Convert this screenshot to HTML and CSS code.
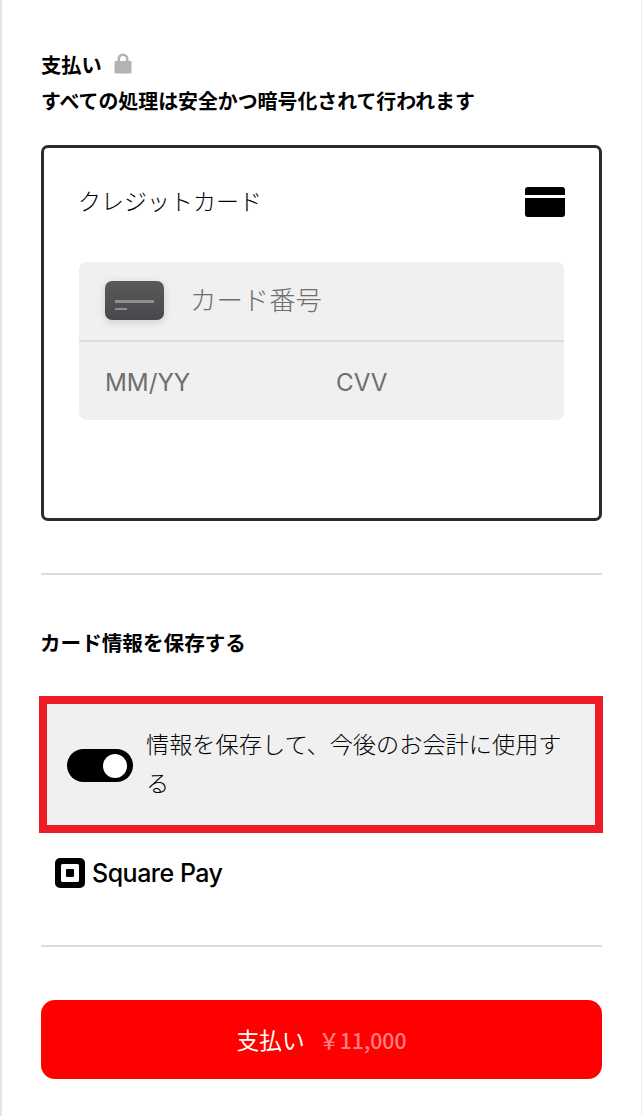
FILE: index.html
```html
<!DOCTYPE html>
<html lang="ja">
<head>
  <meta charset="UTF-8">
  <title>支払い</title>
  <link rel="stylesheet" href="styles.css">
</head>
<body>
  <div class="page">
    <div class="pay-head">
      <div class="pay-title">
        <span>支払い</span>
        <svg class="lock" width="18" height="21" viewBox="0 0 18 21">
          <path d="M3.500 9V6a5.500 5.500 0 0 1 11 0v3h-2.600V6a2.900 2.900 0 0 0-5.800 0v3z" fill="#b3b3b3"/>
          <rect x="0.500" y="8" width="17" height="12.500" rx="1" fill="#b3b3b3"/>
        </svg>
      </div>
      <div class="pay-note">すべての処理は安全かつ暗号化されて行われます</div>
    </div>

    <div class="card-box">
      <div class="card-head">
        <span class="card-name">クレジットカード</span>
        <svg class="card-icon" width="40" height="30" viewBox="0 0 40 30">
          <path d="M0 8V3a3 3 0 0 1 3-3h34a3 3 0 0 1 3 3v5z" fill="#000"/>
          <path d="M0 11h40v16a3 3 0 0 1-3 3H3a3 3 0 0 1-3-3z" fill="#000"/>
        </svg>
      </div>
      <div class="card-form">
        <div class="card-row">
          <div class="card-chip"><i class="chip-long"></i><i class="chip-short"></i></div>
          <span class="card-number">カード番号</span>
        </div>
        <div class="card-row2">
          <span class="expiry">MM/YY</span>
          <span>CVV</span>
        </div>
      </div>
    </div>

    <hr class="rule rule-a">

    <div class="save-title">カード情報を保存する</div>

    <div class="save-box">
      <div class="toggle"><span class="knob"></span></div>
      <div class="save-text">情報を保存して、今後のお会計に使用する</div>
    </div>

    <div class="square">
      <svg width="30" height="30" viewBox="0 0 30 30">
        <path fill-rule="evenodd" d="M5 0h20a5 5 0 0 1 5 5v20a5 5 0 0 1-5 5H5a5 5 0 0 1-5-5V5a5 5 0 0 1 5-5zM7.500 6a1.500 1.500 0 0 0-1.500 1.500v15a1.500 1.500 0 0 0 1.500 1.500h15a1.500 1.500 0 0 0 1.500-1.500v-15a1.500 1.500 0 0 0-1.500-1.500z" fill="#000"/>
        <rect x="11" y="11" width="8" height="8" rx="1" fill="#000"/>
      </svg>
      <span>Square Pay</span>
    </div>

    <hr class="rule rule-b">

    <button class="pay-btn">支払い<span class="price">￥11,000</span></button>
  </div>
</body>
</html>
```

FILE: styles.css
```css
html, body {
  margin: 0;
  padding: 0;
  background: #fff;
}
body {
  font-family: "Liberation Sans", "Noto Sans CJK JP", sans-serif;
  color: #000;
}
.page {
  box-sizing: border-box;
  width: 642px;
  height: 1116px;
  padding: 49px 39px 0 39px;
  border-left: 2px solid #e6e6e6;
  border-right: 1px solid #f0f0f0;
  overflow: hidden;
}
.pay-title {
  display: flex;
  align-items: center;
  gap: 12px;
  height: 30px;
  font-size: 20.3px;
  font-weight: 700;
}
.lock {
  margin-top: -2px;
}
.pay-note {
  margin-top: 8px;
  height: 30px;
  line-height: 30px;
  font-size: 19.9px;
  font-weight: 700;
  white-space: nowrap;
}
.card-box {
  box-sizing: border-box;
  margin-top: 28px;
  height: 376px;
  border: 3px solid #2b2b2b;
  border-radius: 7px;
  padding: 37px 35px 0 35px;
}
.card-head {
  display: flex;
  justify-content: space-between;
  align-items: center;
  height: 34px;
}
.card-name {
  margin-bottom: 4px;
  margin-left: -1px;
  font-size: 23px;
  font-weight: 300;
  color: #000;
}
.card-icon {
  margin-right: -1px;
}
.card-form {
  margin-top: 43px;
  height: 158px;
  background: #f0f0f0;
  border-radius: 8px;
  color: #6e6e6e;
}
.card-row {
  box-sizing: border-box;
  display: flex;
  align-items: center;
  gap: 26px;
  height: 80px;
  padding-left: 26px;
  border-bottom: 2px solid #dcdcdc;
}
.card-chip {
  box-sizing: border-box;
  width: 59px;
  height: 39px;
  margin-top: -1px;
  padding: 19px 10px 0 10px;
  border-radius: 7px;
  background: linear-gradient(#5a5a5c, #47484b);
  box-shadow: 0 2px 8px rgba(0, 0, 0, 0.15);
}
.card-chip i {
  display: block;
  background: #8f8f91;
}
.chip-long {
  height: 3px;
}
.chip-short {
  width: 12px;
  height: 2px;
  margin-top: 5px;
}
.card-number {
  margin-bottom: 5px;
  font-size: 26.400px;
  font-weight: 300;
}
.card-row2 {
  display: flex;
  align-items: center;
  height: 78px;
  padding: 3px 0 0 26px;
  box-sizing: border-box;
  font-family: Inter, sans-serif;
  font-size: 24.200px;
}
.expiry {
  width: 231px;
}
.rule {
  margin: 0;
  border: 0;
  height: 2px;
  background: #dcdcdc;
}
.rule-a {
  margin-top: 52px;
}
.save-title {
  margin-top: 54px;
  margin-left: -1px;
  height: 30px;
  line-height: 30px;
  font-size: 20.6px;
  font-weight: 700;
}
.save-box {
  box-sizing: border-box;
  display: flex;
  align-items: center;
  gap: 13px;
  margin: 37px 0 0 -2px;
  width: 564px;
  height: 137px;
  border: 8px solid #ee1c25;
  background: #f0f0f0;
  padding: 0 20px;
}
.toggle {
  flex: none;
  display: flex;
  justify-content: flex-end;
  align-items: center;
  box-sizing: border-box;
  width: 66px;
  height: 33px;
  margin-top: 2px;
  padding-right: 6px;
  border-radius: 17px;
  background: #000;
}
.knob {
  width: 24px;
  height: 24px;
  border-radius: 50%;
  background: #fff;
}
.save-text {
  font-size: 23.200px;
  font-weight: 300;
  line-height: 39px;
  color: #000;
}
.square {
  display: flex;
  align-items: center;
  gap: 7px;
  margin: 25px 0 0 14px;
  height: 30px;
  font-family: Inter, sans-serif;
  font-size: 25px;
  font-weight: 500;
  letter-spacing: -0.5px;
}
.rule-b {
  margin-top: 57px;
}
.pay-btn {
  display: block;
  width: 561px;
  height: 79px;
  margin-top: 53px;
  border: 0;
  border-radius: 14px;
  background: #ff0000;
  color: #fff;
  font-family: inherit;
  font-size: 22.700px;
}
.price {
  margin-left: 14px;
  color: rgba(255, 255, 255, 0.5);
  font-family: "Noto Sans CJK JP", sans-serif;
  font-size: 21.200px;
  font-weight: 500;
}
```
